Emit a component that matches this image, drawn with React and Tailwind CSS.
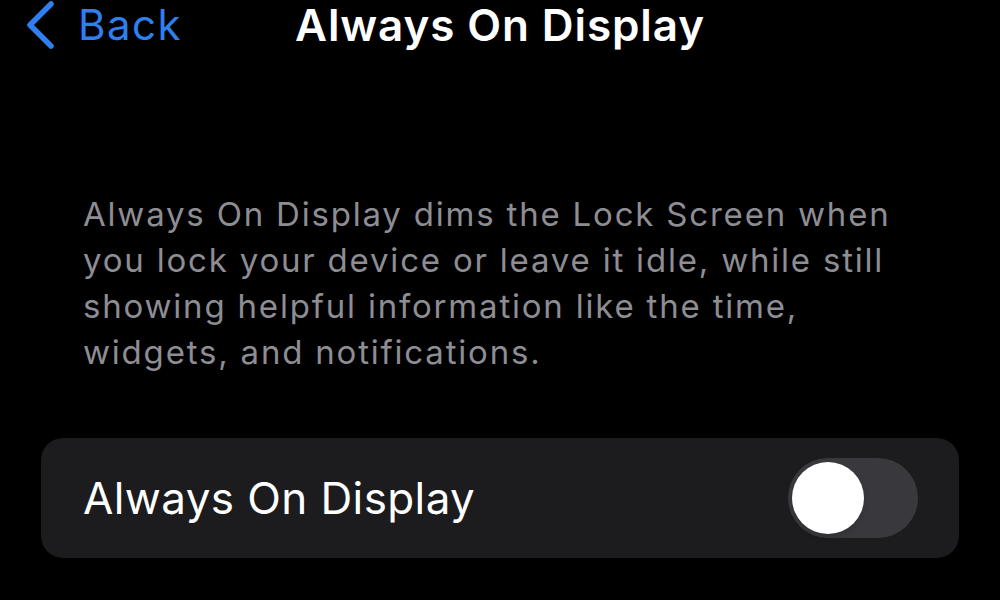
import React, { useState } from 'react';

const App = () => {
  const [enabled, setEnabled] = useState(false);

  return (
    <div className="w-full h-[600px] bg-black overflow-hidden font-['Inter','Liberation_Sans',sans-serif]">
      {/* Nav bar */}
      <div className="grid grid-cols-[1fr_auto_1fr] items-center h-[46px] mt-[1px]">
        <button className="flex items-center text-[#2f7ff0] pl-[25px]">
          <svg width="30" height="48" viewBox="0 0 30 48" fill="none" className="mr-[23px]">
            <path d="M26 3 L5 24 L26 45" stroke="currentColor" strokeWidth="5.5" strokeLinecap="round" strokeLinejoin="round" />
          </svg>
          <span className="text-[42px] leading-none tracking-[1.5px]">Back</span>
        </button>
        <h1 className="text-white text-[44px] font-semibold leading-none tracking-[0.9px]">Always On Display</h1>
        <div />
      </div>

      {/* Description */}
      <p className="mt-[144px] pl-[83px] pr-[90px] text-[#8d8d93] text-[33px] leading-[46px] tracking-[1.8px]">
        Always On Display dims the Lock Screen when you lock your device or leave it idle, while still showing
        helpful information like the time, widgets, and notifications.
      </p>

      {/* Setting row */}
      <div className="mx-[41px] mt-[63px] h-[120px] rounded-[22px] bg-[#1c1c1e] flex items-center justify-between pl-[42px] pr-[41px]">
        <span className="text-white text-[44px] leading-none tracking-[0.4px]">Always On Display</span>
        <button
          onClick={() => setEnabled(!enabled)}
          className={`w-[130px] h-[80px] rounded-full p-[4px] flex ${
            enabled ? 'bg-[#30d158] justify-end' : 'bg-[#39393d] justify-start'
          }`}
        >
          <span className="w-[72px] h-[72px] rounded-full bg-white shadow-md" />
        </button>
      </div>
    </div>
  );
};

export default App;
